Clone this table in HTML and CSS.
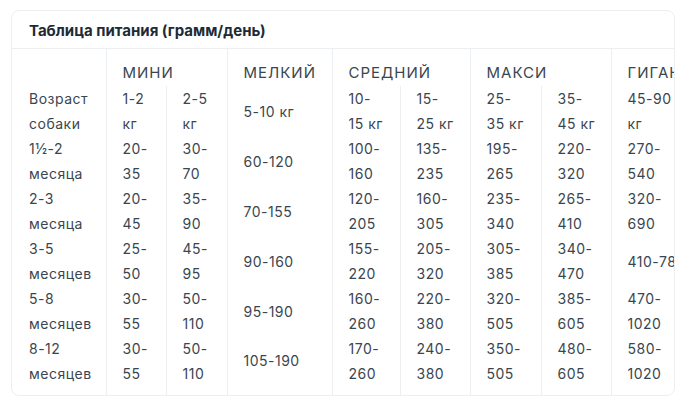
FILE: index.html
```html
<!DOCTYPE html>
<html lang="ru">
<head>
<meta charset="utf-8">
<title>Таблица питания</title>
<link rel="stylesheet" href="styles.css">
</head>
<body>
<div class="card">
  <div class="card-title">Таблица питания (грамм/день)</div>
  <div class="table-wrap">
    <table class="feed">
      <colgroup>
        <col class="c-label">
        <col class="c-mini1"><col class="c-mini2">
        <col class="c-small">
        <col class="c-mid1"><col class="c-mid2">
        <col class="c-max1"><col class="c-max2">
        <col class="c-giant">
      </colgroup>
      <thead>
        <tr class="groups">
          <th class="first"></th>
          <th colspan="2">МИНИ</th>
          <th>МЕЛКИЙ</th>
          <th colspan="2">СРЕДНИЙ</th>
          <th colspan="2">МАКСИ</th>
          <th>ГИГАНТСКИЙ</th>
        </tr>
      </thead>
      <tbody>
        <tr>
          <td class="first">Возраст<br>собаки</td>
          <td>1-2<br>кг</td><td>2-5<br>кг</td>
          <td class="single">5-10 кг</td>
          <td>10-<br>15 кг</td><td>15-<br>25 кг</td>
          <td>25-<br>35 кг</td><td>35-<br>45 кг</td>
          <td>45-90<br>кг</td>
        </tr>
        <tr>
          <td class="first">1½-2<br>месяца</td>
          <td>20-<br>35</td><td>30-<br>70</td>
          <td class="single">60-120</td>
          <td>100-<br>160</td><td>135-<br>235</td>
          <td>195-<br>265</td><td>220-<br>320</td>
          <td>270-<br>540</td>
        </tr>
        <tr>
          <td class="first">2-3<br>месяца</td>
          <td>20-<br>45</td><td>35-<br>90</td>
          <td class="single">70-155</td>
          <td>120-<br>205</td><td>160-<br>305</td>
          <td>235-<br>340</td><td>265-<br>410</td>
          <td>320-<br>690</td>
        </tr>
        <tr>
          <td class="first">3-5<br>месяцев</td>
          <td>25-<br>50</td><td>45-<br>95</td>
          <td class="single">90-160</td>
          <td>155-<br>220</td><td>205-<br>320</td>
          <td>305-<br>385</td><td>340-<br>470</td>
          <td class="single">410-780</td>
        </tr>
        <tr>
          <td class="first">5-8<br>месяцев</td>
          <td>30-<br>55</td><td>50-<br>110</td>
          <td class="single">95-190</td>
          <td>160-<br>260</td><td>220-<br>380</td>
          <td>320-<br>505</td><td>385-<br>605</td>
          <td>470-<br>1020</td>
        </tr>
        <tr class="last">
          <td class="first">8-12<br>месяцев</td>
          <td>30-<br>55</td><td>50-<br>110</td>
          <td class="single">105-190</td>
          <td>170-<br>260</td><td>240-<br>380</td>
          <td>350-<br>505</td><td>480-<br>605</td>
          <td>580-<br>1020</td>
        </tr>
      </tbody>
    </table>
  </div>
</div>
</body>
</html>
```

FILE: styles.css
```css
html, body {
  margin: 0;
  padding: 0;
  background: #ffffff;
}

body {
  padding: 10px 11px 0 11px;
  font-family: Inter, "Noto Sans", sans-serif;
  color: #3a464f;
}

.card {
  width: 664px;
  height: 386px;
  box-sizing: border-box;
  border: 1px solid #eceff1;
  border-radius: 8px;
  overflow: hidden;
  background: #fff;
}

.card-title {
  height: 38px;
  box-sizing: border-box;
  padding: 10px 0 0 17px;
  border-bottom: 1px solid #eceff1;
  font-size: 15px;
  font-weight: 700;
  line-height: 20px;
  color: #1d2b37;
}

.table-wrap {
  overflow: hidden;
}

.feed {
  border-collapse: collapse;
  table-layout: fixed;
  width: 700px;
  font-size: 14px;
  line-height: 25px;
  letter-spacing: 0.5px;
}

.c-label { width: 94px; }
.c-mini1 { width: 60px; }
.c-mini2 { width: 61px; }
.c-small { width: 105px; }
.c-mid1 { width: 68px; }
.c-mid2 { width: 70px; }
.c-max1 { width: 71px; }
.c-max2 { width: 70px; }
.c-giant { width: 101px; }

.feed th,
.feed td {
  padding: 0 0 0 16px;
  text-align: left;
  vertical-align: top;
  white-space: nowrap;
  border-left: 1px solid #eceff1;
}

.feed th.first,
.feed td.first {
  border-left: none;
  padding-left: 17px;
}

.groups th {
  font-weight: 400;
  font-size: 15px;
  letter-spacing: 1px;
  height: 37px;
  box-sizing: border-box;
  padding-top: 11px;
  line-height: 25px;
  color: #3a464f;
}

.feed td {
  height: 50px;
}

.feed td.single {
  vertical-align: middle;
}

.feed tr.last td {
  padding-bottom: 10px;
}

.feed tr.last td.single {
  vertical-align: top;
  padding-top: 12px;
}
```
